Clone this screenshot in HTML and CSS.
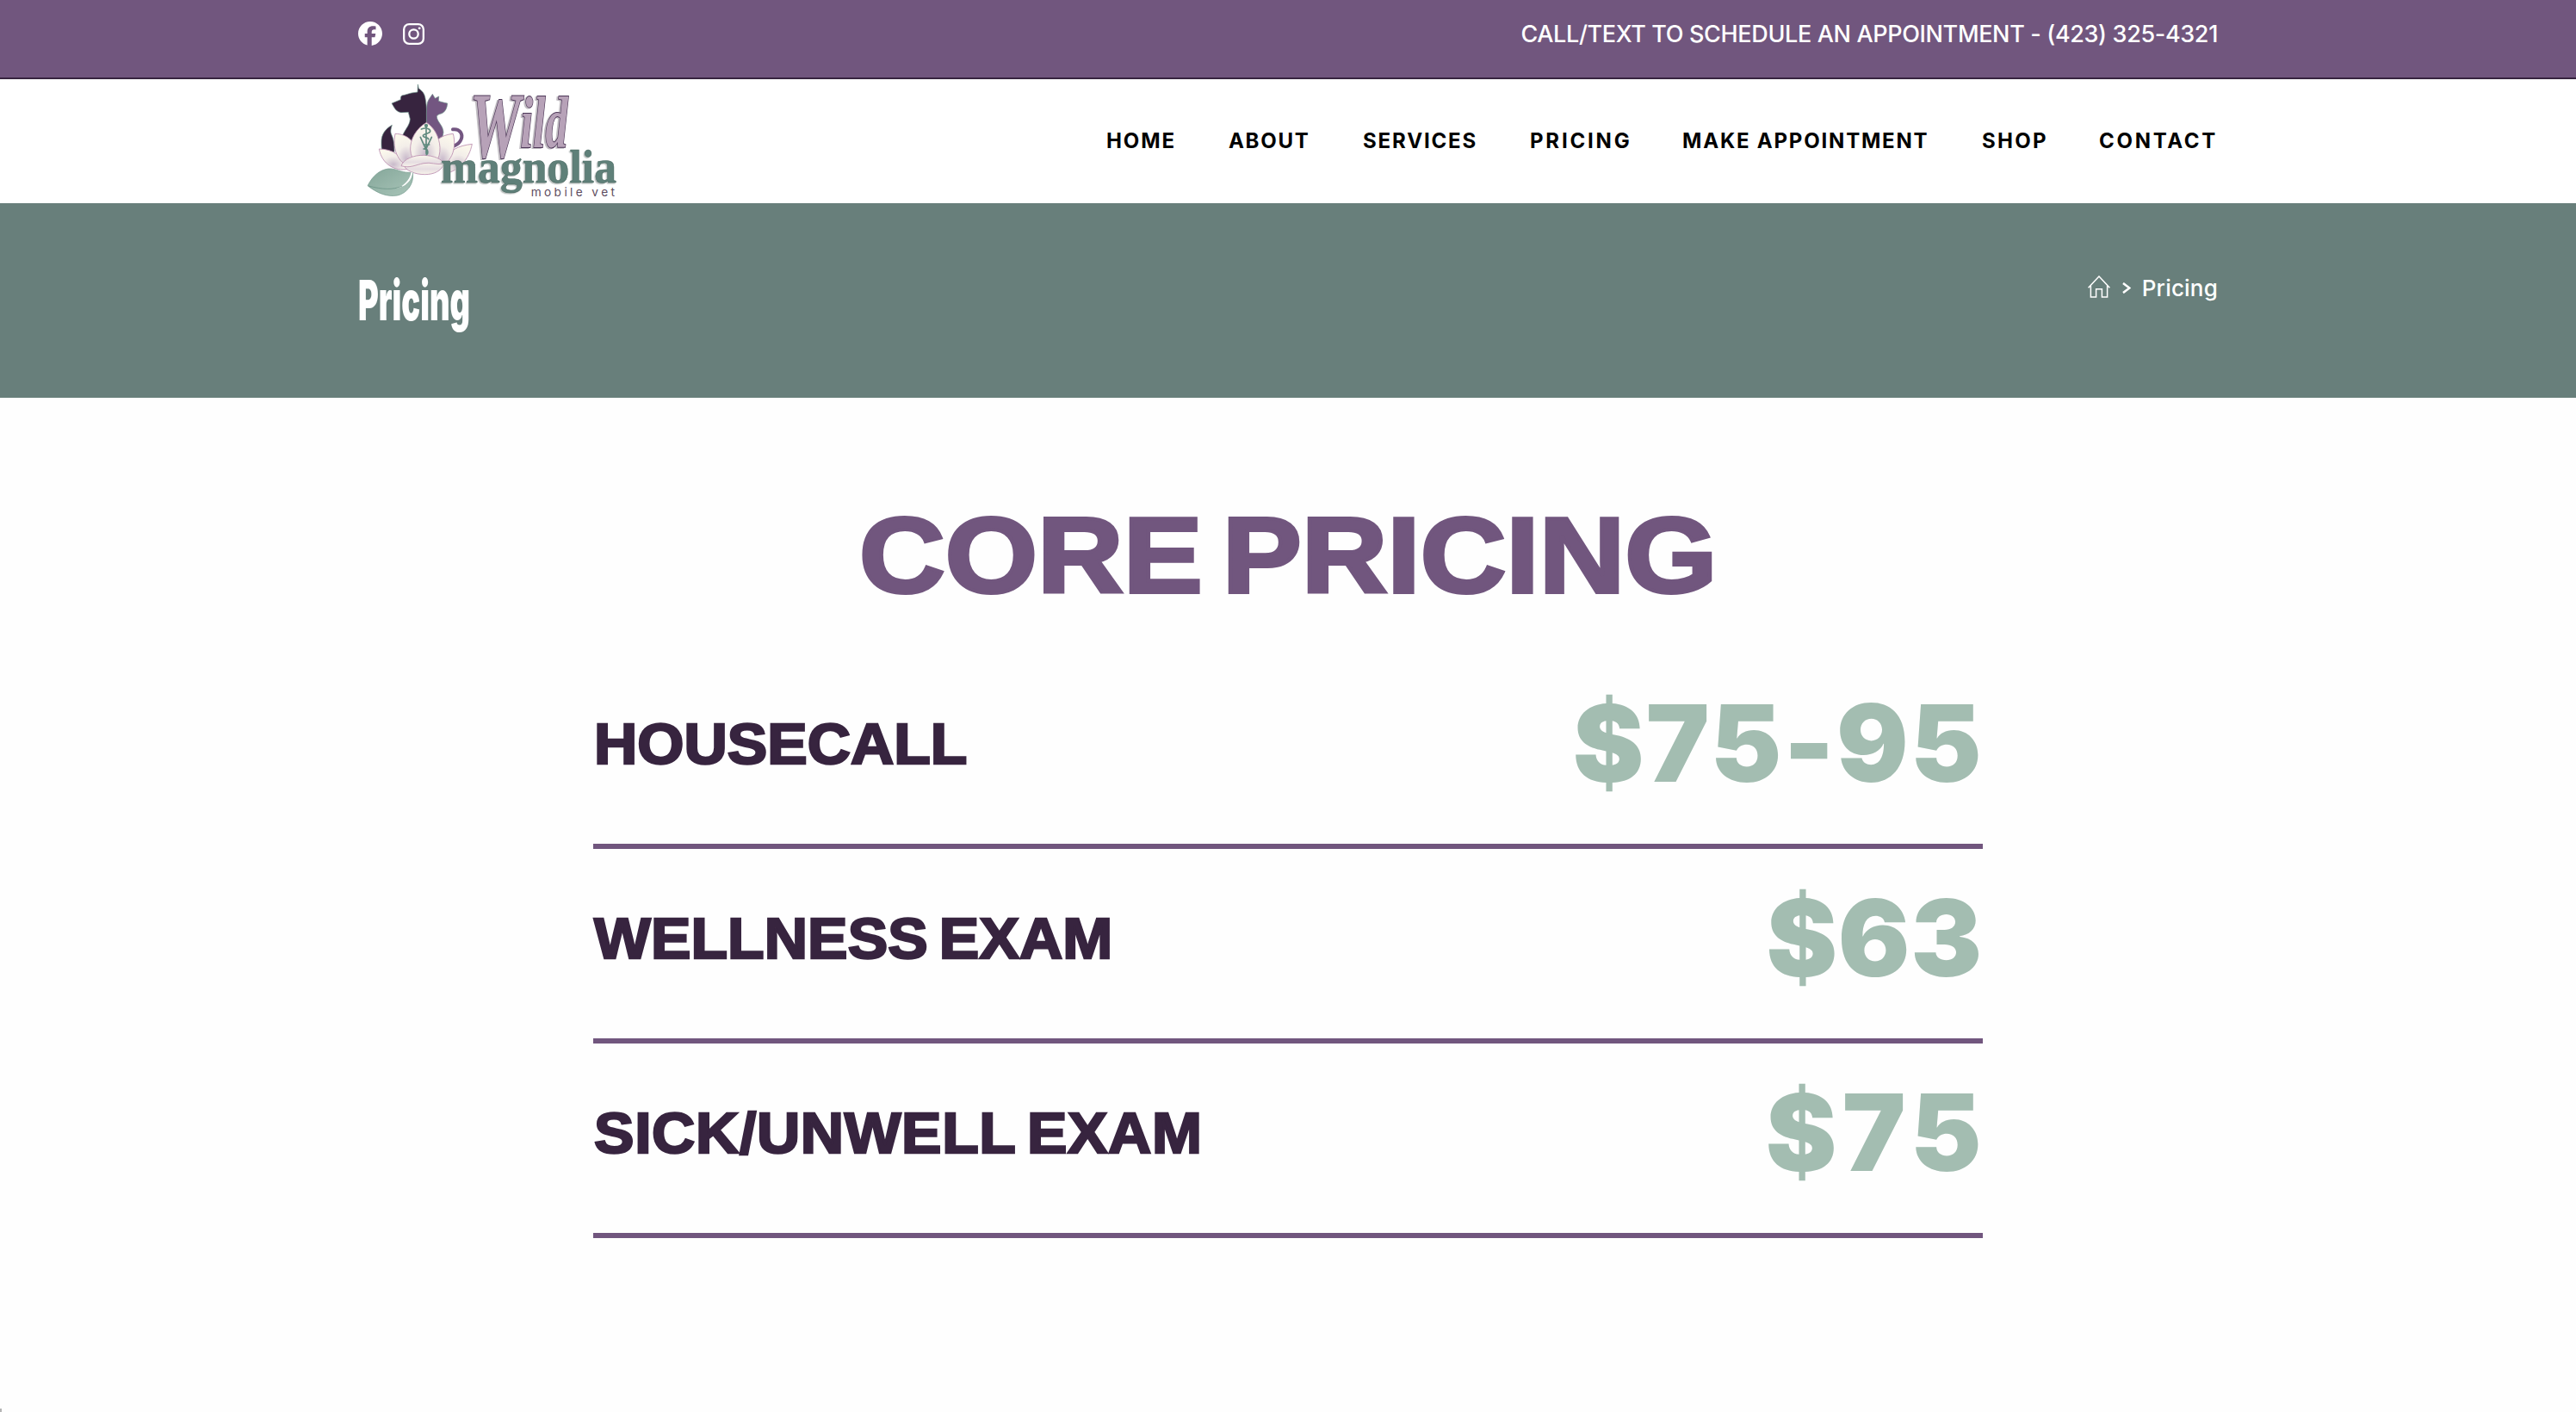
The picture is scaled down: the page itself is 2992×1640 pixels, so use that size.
FILE: index.html
```html
<!DOCTYPE html>
<html lang="en">
<head>
<meta charset="utf-8">
<title>Pricing - Wild Magnolia Mobile Vet</title>
<link rel="stylesheet" href="styles.css">
</head>
<body>
<div class="top-bar">
  <div class="container top-bar-inner">
    <div class="social">
      <svg class="icon-facebook" viewBox="0 0 512 512" aria-label="Facebook"><path fill="#fff" d="M512 256C512 114.600 397.400 0 256 0S0 114.600 0 256c0 120 82.700 220.800 194.200 248.500V334.200h-52.800V256h52.800v-33.700c0-87.100 39.400-127.500 125-127.500 16.200 0 44.200 3.200 55.700 6.400v70.800c-6-.6-16.500-1-29.600-1-42 0-58.200 15.900-58.200 57.200V256h83.600l-14.400 78.200h-69.300v175.900C413.800 494.800 512 386.900 512 256z"/></svg>
      <svg class="icon-instagram" viewBox="0 0 24 24" aria-label="Instagram" fill="none" stroke="#fff" stroke-width="2.200"><rect x="1.100" y="1.100" width="21.800" height="21.800" rx="5.800"/><circle cx="12" cy="12" r="5"/><circle cx="18.400" cy="5.600" r="1.400" fill="#fff" stroke="none"/></svg>
    </div>
    <p class="contact">CALL/TEXT TO SCHEDULE AN APPOINTMENT - (423) 325-4321</p>
  </div>
</div>

<header class="header">
  <div class="container header-inner">
    <svg class="logo" viewBox="48 36 972 432" aria-label="Wild magnolia mobile vet">
      <defs>
        <radialGradient id="petal" cx=".5" cy=".75" r=".7"><stop offset="0" stop-color="#c9bacb"/><stop offset=".55" stop-color="#f3eee9"/><stop offset="1" stop-color="#fbf8ec"/></radialGradient>
        <linearGradient id="petal-front" x1="0" y1="0" x2="0" y2="1"><stop offset="0" stop-color="#fbf8ec"/><stop offset=".6" stop-color="#e6dde2"/><stop offset="1" stop-color="#f8f4ea"/></linearGradient>
        <linearGradient id="leaf" x1="0" y1="0" x2="1" y2="1"><stop offset="0" stop-color="#84a699"/><stop offset="1" stop-color="#a9c5b9"/></linearGradient>
      </defs>
      <!-- dog and cat -->
      <path fill="#37243f" stroke="#6a8f86" stroke-width="2" d="M256 54l3 14c12 8 20 18 22 30 5 22 7 55 5 92l-8 60h-82c10-36 32-50 33-75l-6-24c-9-1-16 2-26 1-13-2-20-11-25-20l-7-12 31-13c0-7 0-10 4-14 14-2 23-7 34-9l21-3z"/>
      <path fill="#37243f" stroke="#6a8f86" stroke-width="2" d="M166 196c-22 12-38 32-37 60 0 14 0 22 3 30l42 4c0-14 0-30-4-45-5-20-14-20-4-49z"/>
      <path fill="#735681" stroke="#6a8f86" stroke-width="2" d="M307 88l9 15 13-7-1 16c10 4 20 6 31 8-1 16-7 28-17 34-10 5-18 4-20 12 0 18 22 30 23 55l-4 22h-54l-1-90c1-25 2-38 10-49z"/>
      <path fill="none" stroke="#735681" stroke-width="12" stroke-linecap="round" d="M378 211c24-4 36 16 29 34-5 14-16 20-24 23"/>
      <!-- flower -->
      <g stroke="#b98cae" stroke-width="2.500" fill="url(#petal)">
        <path d="M121 279c46 0 84 24 100 70-45 9-90-16-100-70z"/>
        <path d="M445 262c-50 6-80 20-96 62l4 40c46-8 82-50 92-102z"/>
        <path d="M177 226c40 0 75 28 80 80l-20 36c-45-6-72-56-60-116z"/>
        <path d="M379 226c-45 4-72 28-78 70l20 50c50-12 72-66 58-120z"/>
        <path d="M286 187c-36 20-58 60-56 95 3 40 25 53 54 56 32-3 50-22 49-64-2-36-19-69-47-87z"/>
        <path fill="url(#petal-front)" d="M204 331c8 24 42 37 76 37 32 0 58-12 66-36-24-14-110-16-142-1z"/>
        <path fill="url(#petal-front)" d="M198 338c8-24 44-38 80-37 34 2 62 12 68 30-28 4-44-7-70-2-30 6-48 18-78 9z"/>
      </g>
      <!-- veterinary staff -->
      <g fill="none" stroke="#5f8a7e" stroke-width="5" stroke-linecap="round"><path d="M285 205v90M268 210c14-6 31-2 31 7 0 10-25 8-25 16 0 7 19 5 19 12M265 238l19 42 20-42M276 264h20M276 279c18-2 16 16 10 20"/><circle cx="285" cy="198" r="4" fill="#5f8a7e"/></g>
      <!-- leaf -->
      <path fill="url(#leaf)" stroke="#6e9588" stroke-width="2" d="M81 407c18-35 42-55 72-59 26-2 44 13 71 13 6 0 12 2 14 0 6 42-22 73-53 80-35 6-70-7-104-34z"/>
      <path fill="#fff" d="M238 360c-3 30-25 52-60 57 28-9 48-26 55-57z"/>
      <path fill="none" stroke="#6e9588" stroke-width="2.500" d="M84 408c48 12 84 15 118 0"/>
      <!-- wordmark -->
      <text class="logo-wild" x="437" y="306" textLength="342" lengthAdjust="spacingAndGlyphs"><tspan class="logo-wild-cap">W</tspan><tspan dy="-33">ild</tspan></text>
      <text class="logo-magnolia" x="336" y="397" textLength="612" lengthAdjust="spacingAndGlyphs">magnolia</text>
      <text class="logo-tagline" x="650" y="443" textLength="292" lengthAdjust="spacing">mobile vet</text>
    </svg>
    <nav class="nav">
      <a class="nav-home">HOME</a>
      <a class="nav-about">ABOUT</a>
      <a class="nav-services">SERVICES</a>
      <a class="nav-pricing">PRICING</a>
      <a class="nav-appointment">MAKE APPOINTMENT</a>
      <a class="nav-shop">SHOP</a>
      <a class="nav-contact">CONTACT</a>
    </nav>
  </div>
</header>

<section class="page-header">
  <div class="container page-header-inner">
    <h1 class="page-title">Pricing</h1>
    <div class="breadcrumbs">
      <svg class="icon-home" viewBox="0 0 26 26" fill="none" stroke="#fff" stroke-width="1.500" aria-label="Home"><path d="M.6 14.200L13 1l12.400 13.200M3.400 11.500v13.600h6.200v-9.300h6.800v9.300h6.200V11.500"/></svg>
      <svg class="icon-chevron" viewBox="0 0 10 13" fill="none" stroke="#fff" stroke-width="2.500"><path d="M1 .9l7.400 5.600L1 12.100"/></svg>
      <span>Pricing</span>
    </div>
  </div>
</section>

<main class="pricing">
  <h2 class="pricing-title"><span>CORE PRICING</span></h2>
  <div class="row"><h3 class="service">HOUSECALL</h3><p class="price price-range">$75-95</p></div>
  <div class="row"><h3 class="service service-wellness">WELLNESS EXAM</h3><p class="price price-wellness">$63</p></div>
  <div class="row"><h3 class="service service-sick">SICK/UNWELL EXAM</h3><p class="price price-sick">$75</p></div>
</main>
<div class="status-corner"></div>
</body>
</html>
```
FILE: styles.css
```css
* { box-sizing: border-box; }
body {
  margin: 0;
  height: 1640px;
  overflow: hidden;
  background: #fefefe;
  font-family: Inter, "Liberation Sans", sans-serif;
}
h1, h2, h3, p { margin: 0; }
.container { width: 2160px; margin: 0 auto; }

.top-bar { height: 92px; background: #71567e; border-bottom: 2px solid #37243f; }
.top-bar-inner { display: flex; justify-content: space-between; color: #fff; }
.social { display: flex; align-items: center; gap: 24px; height: 78px; }
.icon-facebook { width: 28px; height: 28px; }
.icon-instagram { width: 25px; height: 25px; }
.contact { font-size: 27px; line-height: 80px; font-weight: 450; letter-spacing: -0.35px; }

.header { height: 144px; background: #fff; }
.header-inner { display: flex; justify-content: space-between; }
.logo { width: 324px; height: 144px; overflow: visible; }
.logo-wild {
  font: italic 700 256px "Liberation Serif", serif;
  fill: #b7a2b8;
  stroke: #4b3556;
  stroke-width: 6px;
  paint-order: stroke;
  filter: drop-shadow(-6px 3px 0 #c3bfc4);
}
.logo-wild-cap { font-size: 325px; }
.logo-magnolia {
  font: 700 167px "Liberation Serif", serif;
  fill: #5f8079;
  stroke: #47665f;
  stroke-width: 1.5px;
  filter: drop-shadow(-4px 4px 0 #b9bebd);
}
.logo-tagline { font: 400 41px Inter, sans-serif; fill: #5d4c60; }
.nav { display: flex; font-size: 24px; font-weight: 700; line-height: 144px; color: #000; white-space: nowrap; }
.nav-home { width: 142px; letter-spacing: 1.9px; }
.nav-about { width: 156px; letter-spacing: 1.7px; }
.nav-services { width: 194px; letter-spacing: 1.85px; }
.nav-pricing { width: 177px; letter-spacing: 2.8px; }
.nav-appointment { width: 348px; letter-spacing: 1.8px; }
.nav-shop { width: 136px; letter-spacing: 2.3px; }
.nav-contact { width: 138px; letter-spacing: 2.7px; }

.page-header { height: 226px; background: #687f7b; color: #fff; }
.page-header-inner { display: flex; justify-content: space-between; }
.page-title { font-size: 64px; font-weight: 900; line-height: 225px; transform: scaleX(0.567); transform-origin: left; }
.breadcrumbs { display: flex; align-items: center; height: 197px; font-size: 26px; font-weight: 500; letter-spacing: 0.2px; }
.icon-home { width: 26px; height: 26px; margin-right: 14px; margin-top: -3px; }
.icon-chevron { width: 10px; height: 13px; margin-right: 13px; }

.pricing { width: 1614px; margin: 0 auto; padding-top: 108px; font-family: "Liberation Sans", Arial, sans-serif; }
.pricing-title { height: 190px; font-size: 125px; font-weight: 700; line-height: 150px; text-align: center; color: #71567e; white-space: nowrap; }
.pricing-title span { display: inline-block; word-spacing: -14px; transform: scaleX(1.104); -webkit-text-stroke: 4px #71567e; }
.row { display: flex; justify-content: space-between; align-items: center; height: 226px; padding-bottom: 14px; border-bottom: 6px solid #71567e; white-space: nowrap; }
.service { padding: 2px 0 0 1px; font-size: 66px; font-weight: 700; line-height: 1; color: #37243f; -webkit-text-stroke: 2.5px #37243f; transform: scaleX(1.055); transform-origin: left; word-spacing: -6px; }
.service-wellness { letter-spacing: 0.1px; }
.service-sick { letter-spacing: 0.6px; }
.price { font-family: Inter, sans-serif; font-size: 124px; font-weight: 900; line-height: 1; color: #a3bdb1; }
.price-range { letter-spacing: 2.4px; margin-right: -1px; }
.price-wellness { letter-spacing: 0.8px; }
.price-sick { letter-spacing: 6.5px; margin-right: -5px; }

/* corner of the browser status bubble */
.status-corner { position: absolute; left: 0; bottom: 0; width: 2px; height: 4px; background: #b5b5b5; }
```
